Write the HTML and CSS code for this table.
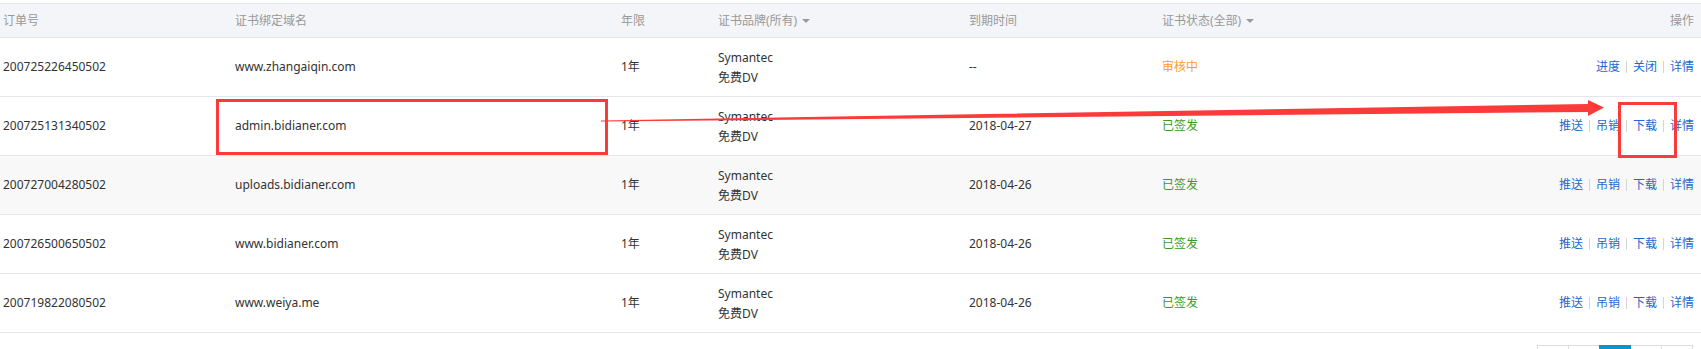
FILE: index.html
```html
<!DOCTYPE html>
<html lang="zh-CN">
<head>
<meta charset="utf-8">
<title>证书列表</title>
<link rel="stylesheet" href="styles.css">
</head>
<body>
<div class="page">
  <div class="table">
    <div class="row head">
      <div class="cell">订单号</div>
      <div class="cell">证书绑定域名</div>
      <div class="cell">年限</div>
      <div class="cell">证书品牌(所有)<span class="caret"></span></div>
      <div class="cell">到期时间</div>
      <div class="cell">证书状态(全部)<span class="caret"></span></div>
      <div class="cell ops">操作</div>
    </div>

    <div class="row">
      <div class="cell">200725226450502</div>
      <div class="cell">www.zhangaiqin.com</div>
      <div class="cell">1年</div>
      <div class="cell brand"><span>Symantec</span><span>免费DV</span></div>
      <div class="cell">--</div>
      <div class="cell st-pending">审核中</div>
      <div class="cell ops"><a>进度</a><i class="sep"></i><a>关闭</a><i class="sep"></i><a>详情</a></div>
    </div>

    <div class="row">
      <div class="cell">200725131340502</div>
      <div class="cell">admin.bidianer.com</div>
      <div class="cell">1年</div>
      <div class="cell brand"><span>Symantec</span><span>免费DV</span></div>
      <div class="cell">2018-04-27</div>
      <div class="cell st-issued">已签发</div>
      <div class="cell ops"><a>推送</a><i class="sep"></i><a>吊销</a><i class="sep"></i><a>下载</a><i class="sep"></i><a>详情</a></div>
    </div>

    <div class="row hover">
      <div class="cell">200727004280502</div>
      <div class="cell">uploads.bidianer.com</div>
      <div class="cell">1年</div>
      <div class="cell brand"><span>Symantec</span><span>免费DV</span></div>
      <div class="cell">2018-04-26</div>
      <div class="cell st-issued">已签发</div>
      <div class="cell ops"><a>推送</a><i class="sep"></i><a>吊销</a><i class="sep"></i><a>下载</a><i class="sep"></i><a>详情</a></div>
    </div>

    <div class="row">
      <div class="cell">200726500650502</div>
      <div class="cell">www.bidianer.com</div>
      <div class="cell">1年</div>
      <div class="cell brand"><span>Symantec</span><span>免费DV</span></div>
      <div class="cell">2018-04-26</div>
      <div class="cell st-issued">已签发</div>
      <div class="cell ops"><a>推送</a><i class="sep"></i><a>吊销</a><i class="sep"></i><a>下载</a><i class="sep"></i><a>详情</a></div>
    </div>

    <div class="row">
      <div class="cell">200719822080502</div>
      <div class="cell">www.weiya.me</div>
      <div class="cell">1年</div>
      <div class="cell brand"><span>Symantec</span><span>免费DV</span></div>
      <div class="cell">2018-04-26</div>
      <div class="cell st-issued">已签发</div>
      <div class="cell ops"><a>推送</a><i class="sep"></i><a>吊销</a><i class="sep"></i><a>下载</a><i class="sep"></i><a>详情</a></div>
    </div>
  </div>

  <div class="pager">
    <span class="pg" aria-label="上一页"></span>
    <span class="pg" aria-label="1"></span>
    <span class="pg active" aria-label="2"></span>
    <span class="pg" aria-label="3"></span>
    <span class="pg" aria-label="下一页"></span>
  </div>

  <svg class="marks" width="1701" height="349" viewBox="0 0 1701 349" aria-hidden="true">
    <rect x="217.5" y="100.5" width="389" height="53" fill="none" stroke="#fb3a3a" stroke-width="3"/>
    <rect x="1619.5" y="103.5" width="56" height="53" fill="none" stroke="#fb3a3a" stroke-width="3"/>
    <polygon fill="#fb3a3a" points="601,120.4 1588,104 1588,100 1604,107.5 1588,116 1588,112 601,121.6"/>
  </svg>
</div>
</body>
</html>
```

FILE: styles.css
```css
html, body {
  margin: 0;
  padding: 0;
  overflow: hidden;
  background: #ffffff;
}

.page {
  position: relative;
  width: 1701px;
  height: 349px;
  padding-top: 3px;
  box-sizing: border-box;
  overflow: hidden;
  font-family: "Noto Sans", "Noto Sans CJK SC", sans-serif;
  font-size: 12px;
  color: #333333;
}

.table {
  display: flex;
  flex-direction: column;
}

.row {
  display: grid;
  grid-template-columns: 232px 386px 97px 251px 193px 1fr auto;
  align-items: center;
  height: 58px;
  border-bottom: 1px solid #e3e6ea;
}

.row.head {
  height: 33px;
  background: #f4f5f9;
  border-top: 1px solid #e3e6ea;
  color: #999999;
}

.row.hover {
  background: #f8f8f8;
}

.cell {
  padding-left: 3px;
  white-space: nowrap;
  line-height: 20px;
  display: flex;
  align-items: center;
}

.cell.brand {
  flex-direction: column;
  align-items: flex-start;
  padding-top: 2px;
}

.cell.ops {
  justify-content: flex-end;
  padding-right: 7px;
}

.caret {
  display: inline-block;
  width: 0;
  height: 0;
  margin-left: 5px;
  border-left: 4px solid transparent;
  border-right: 4px solid transparent;
  border-top: 4px solid #9a9a9a;
}

.st-pending { color: #ff9a2e; }
.st-issued { color: #3a9a1e; }

.ops a {
  color: #2467d0;
  cursor: pointer;
}

.sep {
  display: inline-block;
  width: 0;
  height: 12px;
  border-left: 1px solid #d5d5d5;
  margin: 0 6px 0 6px;
}

.pager {
  display: flex;
  justify-content: flex-end;
  padding-right: 8px;
  margin-top: 12px;
}

.pg {
  width: 32px;
  height: 28px;
  box-sizing: border-box;
  border: 1px solid #dddddd;
  margin-left: -1px;
}

.pg.active {
  background: #0099cc;
  border-color: #0099cc;
  position: relative;
}

.marks {
  position: absolute;
  left: 0;
  top: 0;
  pointer-events: none;
}
```
